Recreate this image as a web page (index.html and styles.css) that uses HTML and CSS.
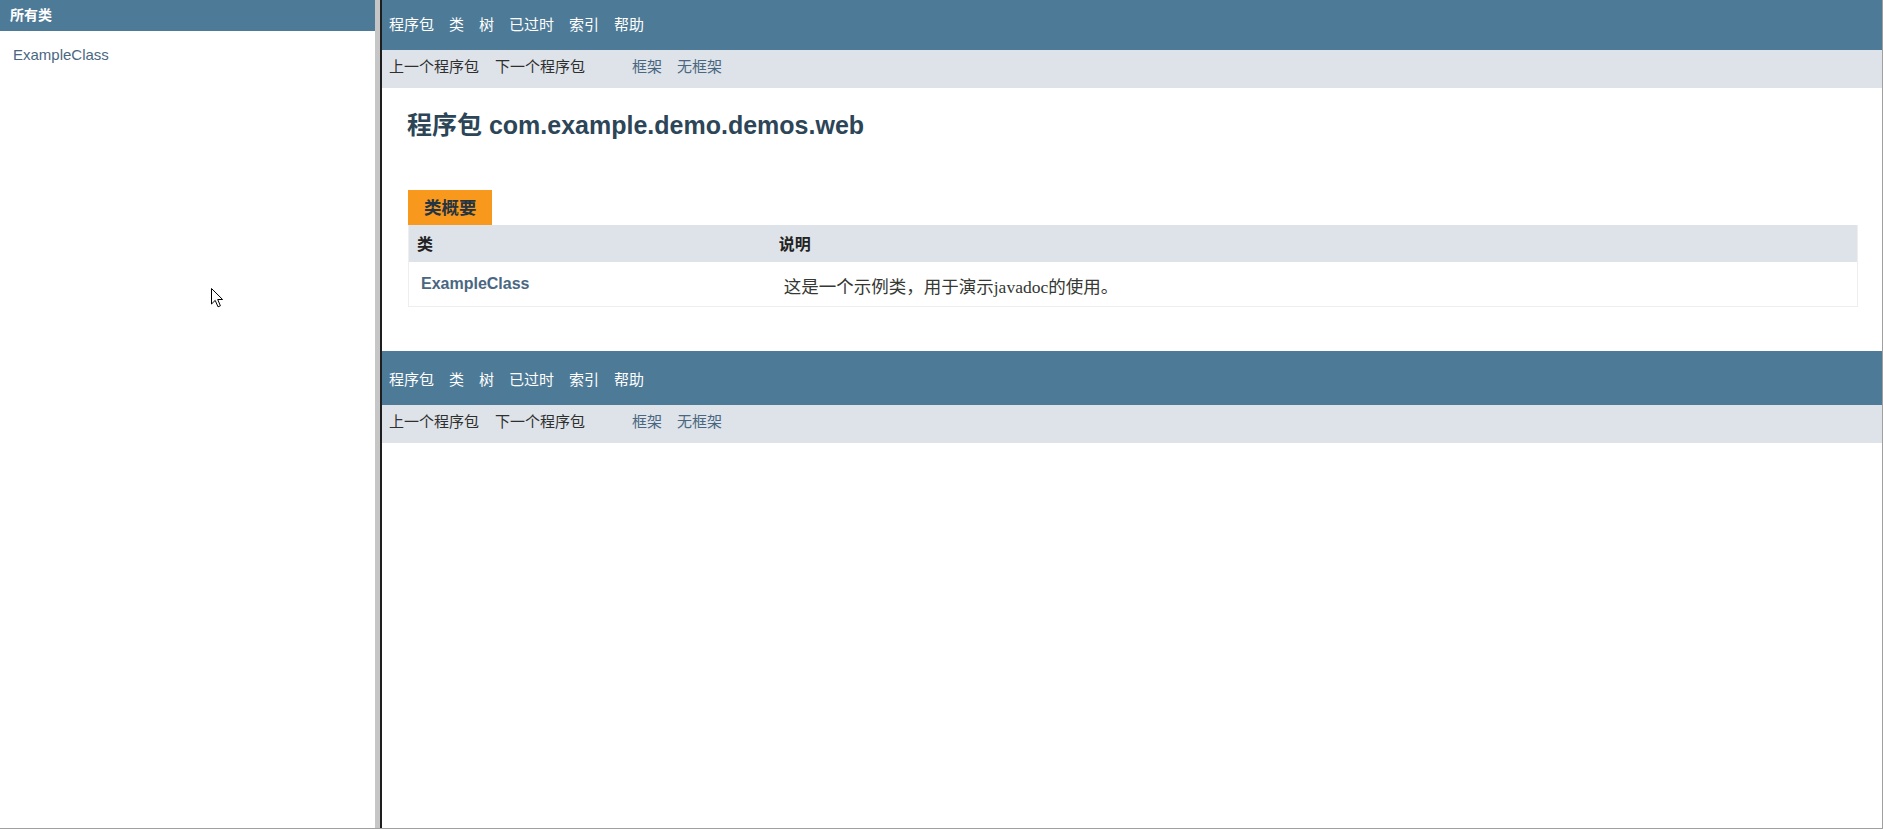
FILE: index.html
```html
<!DOCTYPE html>
<html lang="zh-CN">
<head>
<meta charset="utf-8">
<title>com.example.demo.demos.web</title>
<link rel="stylesheet" href="styles.css">
</head>
<body>
<div class="frameset">
  <div class="frame-left">
    <h1 class="bar">所有类</h1>
    <ul class="index-list">
      <li><a href="#">ExampleClass</a></li>
    </ul>
  </div>
  <div class="splitter"></div>
  <div class="frame-right">
    <div class="topnav topnav-first">
      <ul class="navlist">
        <li>程序包</li>
        <li>类</li>
        <li>树</li>
        <li>已过时</li>
        <li>索引</li>
        <li>帮助</li>
      </ul>
    </div>
    <div class="subnav">
      <ul class="sublist">
        <li>上一个程序包</li>
        <li>下一个程序包</li>
      </ul>
      <ul class="sublist sublist-links">
        <li><a href="#">框架</a></li>
        <li><a href="#">无框架</a></li>
      </ul>
    </div>
    <div class="header">
      <h1 class="title">程序包 com.example.demo.demos.web</h1>
    </div>
    <div class="content">
      <div class="caption">类概要</div>
      <table class="summary">
        <thead>
          <tr>
            <th class="col-first">类</th>
            <th class="col-last">说明</th>
          </tr>
        </thead>
        <tbody>
          <tr>
            <td class="col-first"><a href="#">ExampleClass</a></td>
            <td class="col-last">这是一个示例类，用于演示javadoc的使用。</td>
          </tr>
        </tbody>
      </table>
    </div>
    <div class="topnav">
      <ul class="navlist">
        <li>程序包</li>
        <li>类</li>
        <li>树</li>
        <li>已过时</li>
        <li>索引</li>
        <li>帮助</li>
      </ul>
    </div>
    <div class="subnav">
      <ul class="sublist">
        <li>上一个程序包</li>
        <li>下一个程序包</li>
      </ul>
      <ul class="sublist sublist-links">
        <li><a href="#">框架</a></li>
        <li><a href="#">无框架</a></li>
      </ul>
    </div>
  </div>
  <svg class="cursor" width="14" height="21" viewBox="0 0 14 21">
    <path d="M0.5 0.5 L0.5 16 L4.2 12.4 L7 18.8 L9.4 17.8 L6.7 11.5 L11.6 11.5 Z" fill="#fff" stroke="#000" stroke-width="1" stroke-linejoin="miter"/>
  </svg>
</div>
</body>
</html>
```
FILE: styles.css
```css
html, body {
  margin: 0;
  padding: 0;
  height: 100%;
}
body {
  font-family: "Liberation Sans", "Noto Sans CJK SC", sans-serif;
  background: #fff;
  overflow: hidden;
  color: #353833;
}
a {
  text-decoration: none;
  color: #4A6782;
}
ul {
  list-style: none;
  margin: 0;
  padding: 0;
}

.frameset {
  position: relative;
  display: flex;
  height: 828px;
  border-bottom: 1px solid #a0a0a0;
}

/* left frame */
.frame-left {
  width: 375px;
  flex: none;
  overflow: hidden;
}
.bar {
  margin: 0;
  height: 31px;
  line-height: 31px;
  background: #4D7A97;
  color: #fff;
  font-size: 14px;
  font-weight: bold;
  padding-left: 10px;
}
.index-list {
  padding: 15px 13px 0;
  font-size: 15px;
  line-height: 18px;
}

.splitter {
  width: 5px;
  flex: none;
  background: #c6c6c6;
  border-right: 2px solid #1e1e1e;
}

/* right frame */
.frame-right {
  flex: 1;
  min-width: 0;
  border-right: 1px solid #a0a0a0;
  overflow: hidden;
}

.topnav {
  box-sizing: border-box;
  height: 54px;
  background: #4D7A97;
  padding: 21px 0 0 7px;
}
.topnav-first {
  margin-top: -4px;
}
.navlist {
  display: flex;
  gap: 15px;
  color: #fff;
  font-size: 15px;
  line-height: 15px;
}

.subnav {
  box-sizing: border-box;
  height: 38px;
  background: #dee3e9;
  padding: 9px 0 0 7px;
  display: flex;
}
.sublist {
  display: flex;
  gap: 16px;
  font-size: 15px;
  line-height: 15px;
  color: #2f2f2f;
}
.sublist-links {
  margin-left: 47px;
  gap: 15px;
}

.header {
  padding: 22px 0 0 25px;
}
.title {
  margin: 0;
  font-size: 25px;
  line-height: 30px;
  font-weight: bold;
  color: #2c4557;
}

.content {
  padding: 50px 24px 44px 26px;
}
.caption {
  box-sizing: border-box;
  display: inline-block;
  height: 35px;
  line-height: 35px;
  padding: 1px 15px 0 16px;
  background: #F8981D;
  color: #253441;
  font-size: 17.5px;
  font-weight: bold;
  vertical-align: top;
}
.summary {
  width: 100%;
  border-collapse: collapse;
  border-left: 1px solid #eee;
  border-right: 1px solid #eee;
  border-bottom: 1px solid #eee;
}
.summary th {
  background: #dee3e9;
  text-align: left;
  font-size: 16px;
  line-height: 16px;
  font-weight: bold;
  color: #222;
  padding: 12px 3px 9px 8px;
}
.summary th.col-first {
  width: 25%;
}
.summary td {
  vertical-align: top;
}
.summary td.col-first {
  padding: 12px 0 12px 12px;
  font-size: 16px;
  line-height: 20px;
  font-weight: bold;
}
.summary td.col-last {
  padding: 14px 0 8px 13px;
  font-family: "Liberation Serif", "Noto Sans CJK SC", serif;
  font-size: 17.5px;
  line-height: 22px;
  color: #353833;
}

.cursor {
  position: absolute;
  left: 211px;
  top: 288px;
}
```
